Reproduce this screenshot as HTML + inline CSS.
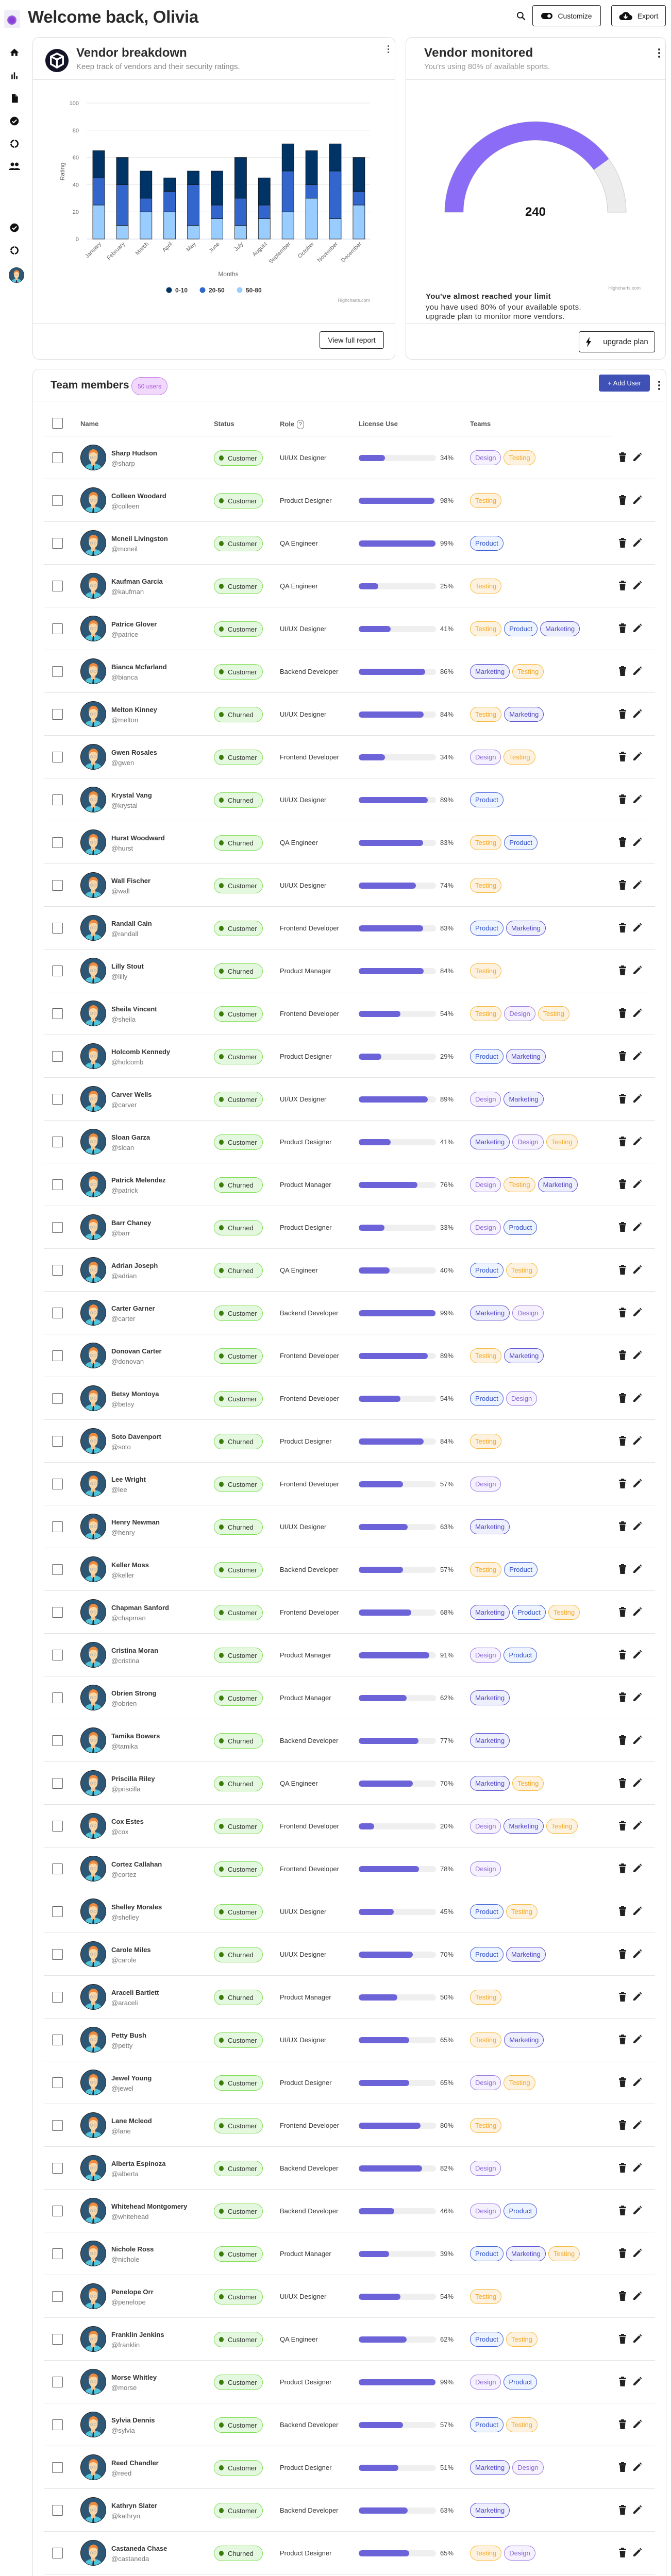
<!DOCTYPE html>
<html><head><meta charset="utf-8">
<style>
*{box-sizing:border-box;margin:0;padding:0}
html,body{width:1302px;height:5018px;overflow:hidden}
body{background:#fff;font-family:"Liberation Sans",Arial,sans-serif;color:#333;position:relative}
.abs{position:absolute}
.card{position:absolute;border:1px solid #dedede;border-radius:12px;background:#fff}
.btn{position:absolute;border:1.5px solid #222;border-radius:4px;background:#fff;font-size:14px;color:#222;display:flex;align-items:center;justify-content:center;gap:10px}
.hline{position:absolute;height:1px;background:#e3e3e3}
.cb{position:absolute;width:21px;height:21px;border:1px solid #666;border-radius:2px;background:#fff}
.row{position:absolute;left:0;width:1300px;height:83px}
.nm{position:absolute;left:216px;font-size:13px;font-weight:bold;color:#333;white-space:nowrap}
.hd{position:absolute;left:216px;font-size:13px;color:#777}
.pill{position:absolute;left:415px;width:95px;height:30px;border:1.5px solid #7fde52;background:#e3f8df;border-radius:15px;font-size:13px;color:#333;display:flex;align-items:center}
.pill i{display:inline-block;width:9px;height:10px;border-radius:50%;background:#3a7b0c;margin:0 8px 0 9px}
.role{position:absolute;left:543px;font-size:13px;color:#333}
.bar{position:absolute;left:696px;width:150px;height:12px;border-radius:6px;background:#efefef;overflow:hidden}
.bar b{display:block;height:12px;border-radius:6px;background:#6d63d8}
.pct{position:absolute;left:854px;font-size:13px;color:#444}
.tags{position:absolute;left:912px;display:flex;gap:5px}
.tag{height:29px;border-radius:15px;border:1.5px solid;font-size:13px;padding:0 9px;display:flex;align-items:center}
.t-Design{border-color:#9a7be0;background:#f6f1fe;color:#8763d6}
.t-Testing{border-color:#f6b93b;background:#fdf2df;color:#f5a623}
.t-Product{border-color:#3d5ed6;background:#eef4ff;color:#3050c8}
.t-Marketing{border-color:#574cd0;background:#eeeffd;color:#4e44c6}
.th{position:absolute;top:815px;font-size:13px;font-weight:bold;color:#555}
</style></head><body>

<div class="abs" style="left:8px;top:20px;width:31px;height:34px;background:#efedf5;border-radius:3px"></div>
<div class="abs" style="left:14px;top:30px;width:18px;height:18px;border-radius:50%;background:radial-gradient(circle,#8a3fd8 40%,#a87ae6 75%,#efedf5 100%)"></div>
<div class="abs" style="left:54px;top:14px;font-size:33px;font-weight:bold;color:#2b2b2b;letter-spacing:-0.3px">Welcome back, Olivia</div>

<svg class="abs" style="left:1001px;top:21px" width="20" height="20" viewBox="0 0 24 24"><circle cx="10" cy="10" r="6.5" fill="none" stroke="#222" stroke-width="2.5"/><path d="M15 15l6 6" stroke="#222" stroke-width="3"/></svg>
<div class="btn" style="left:1033px;top:10px;width:133px;height:41px"><svg width="22" height="12" viewBox="0 0 22 12"><rect x="0" y="0" width="22" height="12" rx="6" fill="#111"/><circle cx="15.5" cy="6" r="3.3" fill="#fff"/></svg><span>Customize</span></div>
<div class="btn" style="left:1186px;top:10px;width:106px;height:41px"><svg width="26" height="20" viewBox="0 0 26 20"><path d="M6 18h15a5 5 0 0 0 0-10 8 8 0 0 0-15-1 5.5 5.5 0 0 0 0 11z" fill="#111"/><path d="M13 7v7M9.5 11l3.5 3.5 3.5-3.5" stroke="#fff" stroke-width="2.2" fill="none"/></svg><span>Export</span></div>

<svg class="abs" style="left:18px;top:92px" width="20" height="20" viewBox="0 0 24 24"><path d="M10 20v-6h4v6h5v-8h3L12 3 2 12h3v8z" fill="#111"/></svg>
<svg class="abs" style="left:18px;top:137px" width="20" height="20" viewBox="0 0 24 24"><path d="M5 9h3v11H5zM10.5 4h3v16h-3zM16 13h3v7h-3z" fill="#111"/></svg>
<svg class="abs" style="left:18px;top:180px" width="20" height="22" viewBox="0 0 24 24"><path d="M6 2h8l6 6v14H6z" fill="#111"/><path d="M14 2v6h6" fill="#fff" opacity=".35"/></svg>
<svg class="abs" style="left:18px;top:225px" width="20" height="20" viewBox="0 0 24 24"><circle cx="12" cy="12" r="10" fill="#111"/><path d="M7 12.5l3.2 3.2L17 9" stroke="#fff" stroke-width="2.4" fill="none"/></svg>
<svg class="abs" style="left:18px;top:269px" width="20" height="20" viewBox="0 0 24 24"><circle cx="12" cy="12" r="8" fill="none" stroke="#111" stroke-width="3.2" stroke-dasharray="11 2"/></svg>
<svg class="abs" style="left:16px;top:313px" width="24" height="20" viewBox="0 0 24 20"><circle cx="8" cy="6" r="3.5" fill="#111"/><circle cx="16.5" cy="6" r="3.5" fill="#111"/><path d="M1 17c0-5 14-5 14 0zM10 17c0-5 13-5 13 0z" fill="#111"/></svg>
<svg class="abs" style="left:18px;top:432px" width="20" height="20" viewBox="0 0 24 24"><circle cx="12" cy="12" r="10" fill="#111"/><path d="M7 12.5l3.2 3.2L17 9" stroke="#fff" stroke-width="2.4" fill="none"/></svg>
<svg class="abs" style="left:18px;top:476px" width="20" height="20" viewBox="0 0 24 24"><circle cx="12" cy="12" r="8" fill="none" stroke="#111" stroke-width="3.2" stroke-dasharray="11 2"/></svg>
<div class="abs" style="left:17px;top:519px" id="sbav"></div>

<div class="card" style="left:63px;top:72px;width:704px;height:626px"></div>
<div class="hline" style="left:64px;top:154px;width:702px"></div>
<div class="hline" style="left:64px;top:627px;width:702px"></div>
<svg class="abs" style="left:87px;top:94px" width="47" height="47" viewBox="0 0 48 48"><circle cx="24" cy="24" r="23" fill="#141428"/><path d="M24 10l12 6v15l-12 7-12-7V16z" fill="none" stroke="#fff" stroke-width="3.5" stroke-linejoin="round"/><path d="M12 16l12 6 12-6M24 22v16" fill="none" stroke="#fff" stroke-width="3.5"/></svg>
<div class="abs" style="left:148px;top:89px;font-size:24px;font-weight:bold;color:#2b2b2b">Vendor breakdown</div>
<div class="abs" style="left:148px;top:121px;font-size:15px;color:#888">Keep track of vendors and their security ratings.</div>
<div class="abs" style="left:752px;top:88px;width:3px;line-height:0"><i style="display:block;width:3px;height:3px;border-radius:50%;background:#444;margin-bottom:3px"></i><i style="display:block;width:3px;height:3px;border-radius:50%;background:#444;margin-bottom:3px"></i><i style="display:block;width:3px;height:3px;border-radius:50%;background:#444"></i></div>
<div class="btn" style="left:620px;top:643px;width:125px;height:34px;border-width:1.3px;font-size:14px">View full report</div>

<div class="card" style="left:787px;top:72px;width:505px;height:626px"></div>
<div class="hline" style="left:788px;top:154px;width:503px"></div>
<div class="hline" style="left:788px;top:627px;width:503px"></div>
<div class="abs" style="left:823px;top:89px;font-size:24px;font-weight:bold;color:#2b2b2b;letter-spacing:.4px">Vendor monitored</div>
<div class="abs" style="left:823px;top:121px;font-size:15px;color:#999">You'rs using 80% of available sports.</div>
<div class="abs" style="left:1277px;top:94px;width:4px;line-height:0"><i style="display:block;width:4px;height:4px;border-radius:50%;background:#333;margin-bottom:3px"></i><i style="display:block;width:4px;height:4px;border-radius:50%;background:#333;margin-bottom:3px"></i><i style="display:block;width:4px;height:4px;border-radius:50%;background:#333"></i></div>
<div class="abs" style="left:826px;top:567px;font-size:15px;font-weight:bold;color:#2b2b2b;letter-spacing:.3px">You've almost reached your limit</div>
<div class="abs" style="left:826px;top:588px;font-size:15px;color:#333;line-height:18px;letter-spacing:.3px">you have used 80% of your available spots.<br>upgrade plan to monitor more vendors.</div>
<div class="btn" style="left:1123px;top:643px;width:148px;height:41px;font-size:15px;gap:22px"><svg width="12" height="20" viewBox="0 0 12 20"><path d="M8 0L1 11h4l-2 9 8-12H7z" fill="#111"/></svg><span>upgrade plan</span></div>

<svg class="abs" style="left:0;top:0" width="1300" height="700" id="ch" font-family="Liberation Sans, Arial, sans-serif"></svg>

<div class="card" style="left:63px;top:716px;width:1230px;height:4290px;border-bottom:none;border-radius:12px 12px 0 0"></div>
<div class="hline" style="left:64px;top:778px;width:1228px"></div>
<div class="abs" style="left:98px;top:736px;font-size:21px;font-weight:bold;color:#2b2b2b">Team members</div>
<div class="abs" style="left:255px;top:732px;width:70px;height:35px;border:1.5px solid #c77ce8;background:#f1d9fb;border-radius:18px;font-size:12px;color:#b05ee0;display:flex;align-items:center;justify-content:center">50 users</div>
<div class="abs" style="left:1162px;top:727px;width:99px;height:33px;background:#3f51b5;border-radius:4px;color:#fff;font-size:13px;display:flex;align-items:center;justify-content:center">+ Add User</div>
<div class="abs" style="left:1277px;top:739px;width:4px;line-height:0"><i style="display:block;width:4px;height:4px;border-radius:50%;background:#333;margin-bottom:3px"></i><i style="display:block;width:4px;height:4px;border-radius:50%;background:#333;margin-bottom:3px"></i><i style="display:block;width:4px;height:4px;border-radius:50%;background:#333"></i></div>

<div class="cb" style="left:101px;top:811px"></div>
<div class="th" style="left:156px">Name</div>
<div class="th" style="left:415px">Status</div>
<div class="th" style="left:543px">Role <span style="display:inline-block;width:14px;height:18px;border:1px solid #777;border-radius:8px;font-size:11px;font-weight:normal;text-align:center;line-height:16px;vertical-align:middle;margin-left:1px">?</span></div>
<div class="th" style="left:696px">License Use</div>
<div class="th" style="left:912px">Teams</div>
<div class="hline" style="left:85px;top:846px;width:1103px"></div>

<div id="rows"></div>

<script>
var AV='<svg width="50" height="50" viewBox="0 0 50 50"><defs><clipPath id="c"><circle cx="25" cy="25" r="24"/></clipPath></defs><circle cx="25" cy="25" r="24.5" fill="#2e5675" stroke="#1d1d1d"/><g clip-path="url(#c)"><path d="M8 50c0-9 7-13 17-13s17 4 17 13z" fill="#4fc4dc"/><path d="M21 32h8v8l-4 3-4-3z" fill="#f3c28e"/><path d="M24 40h2l1 10h-4z" fill="#1b2b3a"/><ellipse cx="25" cy="24" rx="8.5" ry="11" fill="#f8d6a6"/><path d="M16 22c-1-9 5-13 9-13s11 3 9 13c-2-5-5-7-9-7s-7 2-9 7z" fill="#ef8a3c"/><circle cx="21.5" cy="25" r="2.3" fill="none" stroke="#aaa" stroke-width=".8"/><circle cx="28.5" cy="25" r="2.3" fill="none" stroke="#aaa" stroke-width=".8"/></g></svg>';
document.getElementById('sbav').innerHTML=AV.replace('width="50" height="50"','width="30" height="30"').replace('id="c"','id="c2"').replace('url(#c)','url(#c2)');
var R=[
["Sharp Hudson","sharp",1,"UI/UX Designer",34,"Design,Testing"],
["Colleen Woodard","colleen",1,"Product Designer",98,"Testing"],
["Mcneil Livingston","mcneil",1,"QA Engineer",99,"Product"],
["Kaufman Garcia","kaufman",1,"QA Engineer",25,"Testing"],
["Patrice Glover","patrice",1,"UI/UX Designer",41,"Testing,Product,Marketing"],
["Bianca Mcfarland","bianca",1,"Backend Developer",86,"Marketing,Testing"],
["Melton Kinney","melton",0,"UI/UX Designer",84,"Testing,Marketing"],
["Gwen Rosales","gwen",1,"Frontend Developer",34,"Design,Testing"],
["Krystal Vang","krystal",0,"UI/UX Designer",89,"Product"],
["Hurst Woodward","hurst",0,"QA Engineer",83,"Testing,Product"],
["Wall Fischer","wall",1,"UI/UX Designer",74,"Testing"],
["Randall Cain","randall",1,"Frontend Developer",83,"Product,Marketing"],
["Lilly Stout","lilly",0,"Product Manager",84,"Testing"],
["Sheila Vincent","sheila",1,"Frontend Developer",54,"Testing,Design,Testing"],
["Holcomb Kennedy","holcomb",1,"Product Designer",29,"Product,Marketing"],
["Carver Wells","carver",1,"UI/UX Designer",89,"Design,Marketing"],
["Sloan Garza","sloan",1,"Product Designer",41,"Marketing,Design,Testing"],
["Patrick Melendez","patrick",0,"Product Manager",76,"Design,Testing,Marketing"],
["Barr Chaney","barr",0,"Product Designer",33,"Design,Product"],
["Adrian Joseph","adrian",0,"QA Engineer",40,"Product,Testing"],
["Carter Garner","carter",1,"Backend Developer",99,"Marketing,Design"],
["Donovan Carter","donovan",1,"Frontend Developer",89,"Testing,Marketing"],
["Betsy Montoya","betsy",1,"Frontend Developer",54,"Product,Design"],
["Soto Davenport","soto",0,"Product Designer",84,"Testing"],
["Lee Wright","lee",1,"Frontend Developer",57,"Design"],
["Henry Newman","henry",0,"UI/UX Designer",63,"Marketing"],
["Keller Moss","keller",1,"Backend Developer",57,"Testing,Product"],
["Chapman Sanford","chapman",1,"Frontend Developer",68,"Marketing,Product,Testing"],
["Cristina Moran","cristina",1,"Product Manager",91,"Design,Product"],
["Obrien Strong","obrien",1,"Product Manager",62,"Marketing"],
["Tamika Bowers","tamika",0,"Backend Developer",77,"Marketing"],
["Priscilla Riley","priscilla",0,"QA Engineer",70,"Marketing,Testing"],
["Cox Estes","cox",1,"Frontend Developer",20,"Design,Marketing,Testing"],
["Cortez Callahan","cortez",1,"Frontend Developer",78,"Design"],
["Shelley Morales","shelley",1,"UI/UX Designer",45,"Product,Testing"],
["Carole Miles","carole",0,"UI/UX Designer",70,"Product,Marketing"],
["Araceli Bartlett","araceli",0,"Product Manager",50,"Testing"],
["Petty Bush","petty",1,"UI/UX Designer",65,"Testing,Marketing"],
["Jewel Young","jewel",1,"Product Designer",65,"Design,Testing"],
["Lane Mcleod","lane",1,"Frontend Developer",80,"Testing"],
["Alberta Espinoza","alberta",1,"Backend Developer",82,"Design"],
["Whitehead Montgomery","whitehead",1,"Backend Developer",46,"Design,Product"],
["Nichole Ross","nichole",1,"Product Manager",39,"Product,Marketing,Testing"],
["Penelope Orr","penelope",1,"UI/UX Designer",54,"Testing"],
["Franklin Jenkins","franklin",1,"QA Engineer",62,"Product,Testing"],
["Morse Whitley","morse",1,"Product Designer",99,"Design,Product"],
["Sylvia Dennis","sylvia",1,"Backend Developer",57,"Product,Testing"],
["Reed Chandler","reed",1,"Product Designer",51,"Marketing,Design"],
["Kathryn Slater","kathryn",1,"Backend Developer",63,"Marketing"],
["Castaneda Chase","castaneda",0,"Product Designer",65,"Testing,Design"]];
var TR='<svg width="14" height="19" viewBox="0 0 14 19"><rect x="4" y="0" width="6" height="2" fill="#222"/><rect x="0" y="2" width="14" height="3" rx="1" fill="#222"/><path d="M1.5 6h11l-1 13h-9z" fill="#222"/></svg>';
var PN='<svg width="18" height="19" viewBox="0 0 18 19"><path d="M2 14L13 3l3 3L5 17H2z" fill="#222"/><path d="M14 2l1.5-1.5 3 3L17 5z" fill="#222"/></svg>';
var h='';
R.forEach(function(r,i){
 var t=847+i*83;
 var tags=r[5].split(',').map(function(x){return '<span class="tag t-'+x+'">'+x+'</span>'}).join('');
 h+='<div class="row" style="top:'+t+'px">'+
 '<div class="cb" style="left:101px;top:31px"></div>'+
 '<div class="abs" style="left:156px;top:16px">'+AV.replace(/id="c"/,'id="a'+i+'"').replace('url(#c)','url(#a'+i+')')+'</div>'+
 '<div class="nm" style="top:25px">'+r[0]+'</div>'+
 '<div class="hd" style="top:45px">@'+r[1]+'</div>'+
 '<div class="pill" style="top:27px"><i></i>'+(r[2]?'Customer':'Churned')+'</div>'+
 '<div class="role" style="top:34px">'+r[3]+'</div>'+
 '<div class="bar" style="top:36px"><b style="width:'+r[4]+'%"></b></div>'+
 '<div class="pct" style="top:34px">'+r[4]+'%</div>'+
 '<div class="tags" style="top:27px">'+tags+'</div>'+
 '<div class="abs" style="left:1201px;top:31px">'+TR+'</div>'+
 '<div class="abs" style="left:1227px;top:31px">'+PN+'</div>'+
 '<div class="hline" style="left:85px;top:82px;width:1186px"></div></div>';
});
document.getElementById('rows').innerHTML=h;

var s='';
function Y(v){return 464-v*2.64}
for(var g=0;g<=100;g+=20){
 s+='<line x1="168" x2="718" y1="'+Y(g)+'" y2="'+Y(g)+'" stroke="'+(g?'#e6e6e6':'#ccd6eb')+'"/>';
 s+='<text x="153" y="'+(Y(g)+4)+'" font-size="11" fill="#666" text-anchor="end">'+g+'</text>';
}
s+='<text x="125" y="333" font-size="12" fill="#666" text-anchor="middle" transform="rotate(-90 125 333)">Rating</text>';
var D=[[25,45,65],[10,40,60],[20,30,50],[20,35,45],[10,40,50],[15,25,50],[10,30,60],[15,25,45],[20,50,70],[30,40,65],[15,50,70],[25,35,60]];
var M=["January","February","March","April","May","June","July","August","September","October","November","December"];
D.forEach(function(d,i){
 var x=180+i*45.9;
 s+='<rect x="'+x+'" y="'+Y(d[0])+'" width="23" height="'+(d[0]*2.64)+'" fill="#99ccff" stroke="#111" stroke-width="0.8"/>';
 s+='<rect x="'+x+'" y="'+Y(d[1])+'" width="23" height="'+((d[1]-d[0])*2.64)+'" fill="#3366cc" stroke="#111" stroke-width="0.8"/>';
 s+='<rect x="'+x+'" y="'+Y(d[2])+'" width="23" height="'+((d[2]-d[1])*2.64)+'" fill="#003366" stroke="#111" stroke-width="0.8"/>';
 var cx=x+17, cy=474;
 s+='<text x="'+cx+'" y="'+cy+'" font-size="11" fill="#666" text-anchor="end" transform="rotate(-45 '+cx+' '+cy+')">'+M[i]+'</text>';
});
s+='<text x="443" y="536" font-size="12" fill="#666" text-anchor="middle">Months</text>';
[[328,"#003366","0-10"],[393,"#3366cc","20-50"],[465,"#99ccff","50-80"]].forEach(function(l){
 s+='<circle cx="'+l[0]+'" cy="563" r="5.5" fill="'+l[1]+'"/><text x="'+(l[0]+12)+'" y="567.5" font-size="12" font-weight="bold" fill="#333">'+l[2]+'</text>';
});
s+='<text x="718" y="586" font-size="9" fill="#999" text-anchor="end">Highcharts.com</text>';
var cx=1039,cy=412,ro=176,ri=140,a=36*Math.PI/180;
var ox=cx+ro*Math.cos(a),oy=cy-ro*Math.sin(a),ix=cx+ri*Math.cos(a),iy=cy-ri*Math.sin(a);
s+='<path d="M'+(cx-ro)+' '+cy+'A'+ro+' '+ro+' 0 0 1 '+(cx+ro)+' '+cy+'H'+(cx+ri)+'A'+ri+' '+ri+' 0 0 0 '+(cx-ri)+' '+cy+'Z" fill="#ececec" stroke="#cccccc"/>';
s+='<path d="M'+(cx-ro)+' '+cy+'A'+ro+' '+ro+' 0 0 1 '+ox+' '+oy+'L'+ix+' '+iy+'A'+ri+' '+ri+' 0 0 0 '+(cx-ri)+' '+cy+'Z" fill="#8b6cf6"/>';
s+='<text x="'+cx+'" y="419" font-size="24" font-weight="bold" fill="#111" text-anchor="middle">240</text>';
s+='<text x="1243" y="562" font-size="9" fill="#999" text-anchor="end">Highcharts.com</text>';
document.getElementById('ch').innerHTML=s;
</script>
</body></html>
